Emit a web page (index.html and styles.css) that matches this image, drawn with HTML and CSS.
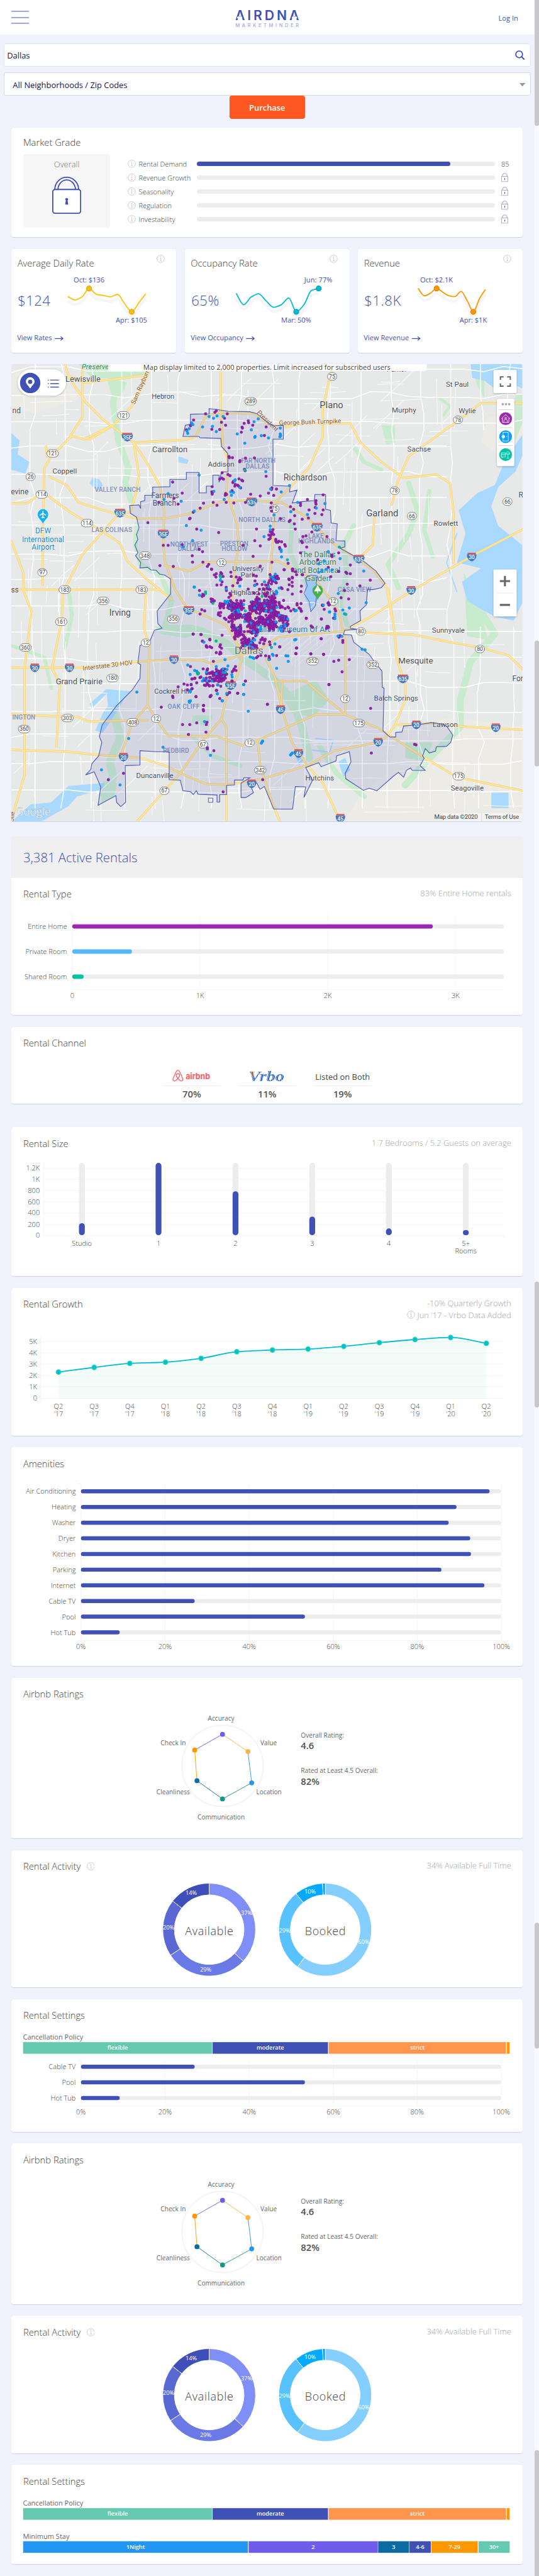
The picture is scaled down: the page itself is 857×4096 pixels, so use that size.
FILE: index.html
```html
<!DOCTYPE html>
<html lang="en">
<head>
<meta charset="utf-8">
<title>AirDNA MarketMinder - Dallas</title>
<link rel="stylesheet" href="styles.css">
</head>
<body>
<svg class="defs" aria-hidden="true">
  <symbol id="info" viewBox="0 0 14 14"><circle cx="7" cy="7" r="6.3" fill="none" stroke="#c4c4c4" stroke-width="1"/><path d="M6 5.8h1.3v4.4M5.8 10.3h2.6" fill="none" stroke="#c4c4c4" stroke-width=".9"/><circle cx="7" cy="3.9" r=".8" fill="#c4c4c4"/></symbol>
  <symbol id="lock" viewBox="0 0 50 64"><path d="M4.500 22V22a20.500 21 0 0 1 41 0M10 22a15 16.500 0 0 1 30 0" fill="none" stroke="currentColor" stroke-width="2"/><rect x="1" y="22" width="48" height="41" rx="4" fill="#fff" stroke="currentColor" stroke-width="2"/><path d="M25 36.500a2.500 2.500 0 0 1 1.500 4.500l1.200 7h-5.400l1.200-7a2.500 2.500 0 0 1 1.500-4.500z" fill="currentColor"/></symbol>
  <symbol id="lock-sm" viewBox="0 0 12 16"><path d="M2 6V5a4 4.200 0 0 1 8 0v1" fill="none" stroke="#9fa8da" stroke-width="1.300"/><rect x=".6" y="6" width="10.800" height="9" fill="#fff" stroke="#9fa8da"/><path d="M6 9v3" stroke="#3f51b5" stroke-width="1.200"/></symbol>
</svg>
<div class="page">
  <main class="content">
    <header class="topbar">
      <button class="menu" aria-label="Menu"><i></i><i></i><i></i></button>
      <svg class="brand" width="112" height="32" viewBox="401 16 112 32">
        <text x="402" y="34.600" class="brand-name" textLength="110" lengthAdjust="spacing">AIRDNA</text>
        <path d="M406 28.200h7.600l1 3.200h-9.600zM500.400 28.200h7.600l1 3.200h-9.600z" fill="#fff"/>
        <text x="402.500" y="46" class="brand-sub" textLength="109" lengthAdjust="spacing">MARKETMINDER</text>
      </svg>
      <a class="login">Log In</a>
    </header>

    <div class="field search"><span>Dallas</span>
      <svg width="17" height="17" viewBox="0 0 17 17"><circle cx="7" cy="7" r="5.800" fill="none" stroke="#3f51b5" stroke-width="1.900"/><path d="M11 11l5 5" stroke="#3f51b5" stroke-width="2.200"/></svg>
    </div>
    <div class="field select"><span>All Neighborhoods / Zip Codes</span>
      <svg width="10" height="6" viewBox="0 0 10 6"><path d="M0 0h10L5 6z" fill="#999"/></svg>
    </div>
    <button class="purchase">Purchase</button>

    <section class="card grade">
      <h2>Market Grade</h2>
      <div class="grade-body">
        <div class="overall"><span>Overall</span><svg width="50" height="64"><use href="#lock"/></svg></div>
        <ul class="metrics">
          <li><svg width="14" height="14"><use href="#info"/></svg><span>Rental Demand</span><b><i style="width:85%"></i></b><em>85</em></li>
          <li><svg width="14" height="14"><use href="#info"/></svg><span>Revenue Growth</span><b></b><em><svg width="12" height="16"><use href="#lock-sm"/></svg></em></li>
          <li><svg width="14" height="14"><use href="#info"/></svg><span>Seasonality</span><b></b><em><svg width="12" height="16"><use href="#lock-sm"/></svg></em></li>
          <li><svg width="14" height="14"><use href="#info"/></svg><span>Regulation</span><b></b><em><svg width="12" height="16"><use href="#lock-sm"/></svg></em></li>
          <li><svg width="14" height="14"><use href="#info"/></svg><span>Investability</span><b></b><em><svg width="12" height="16"><use href="#lock-sm"/></svg></em></li>
        </ul>
      </div>
    </section>

    <div class="kpis">
      <section class="card kpi"><div class="kpi-head"><h2>Average Daily Rate</h2><svg width="14" height="14"><use href="#info"/></svg></div><div data-chart="adr"></div></section>
      <section class="card kpi"><div class="kpi-head"><h2>Occupancy Rate</h2><svg width="14" height="14"><use href="#info"/></svg></div><div data-chart="occupancy"></div></section>
      <section class="card kpi"><div class="kpi-head"><h2>Revenue</h2><svg width="14" height="14"><use href="#info"/></svg></div><div data-chart="revenue"></div></section>
    </div>

    <section class="card map">
      <svg width="881" height="788" viewBox="20 628 881 788">
        <g id="map-base"></g>
        <g class="map-ui">
          <rect x="187" y="620" width="549" height="20" rx="3" fill="#fff"/>
          <text x="460.500" y="638" class="notice" text-anchor="middle" textLength="426">Map display limited to 2,000 properties. Limit increased for subscribed users</text>
          <rect class="raised" x="31" y="637" width="83.500" height="45.500" rx="22.700"/>
          <circle cx="52.500" cy="660.500" r="17.500" fill="#3f51b5"/>
          <path d="M52.500 670c-4-6-7.500-8.500-7.500-12a7.500 7.500 0 0 1 15 0c0 3.500-3.500 6-7.500 12z" fill="#fff"/><circle cx="52.500" cy="658.500" r="3.600" fill="#3f51b5"/>
          <path d="M87 655.500h15M87 661.500h15M87 667.500h15" stroke="#3f51b5" stroke-width="1.600"/><path d="M83 655.500h1.600M83 661.500h1.600M83 667.500h1.600" stroke="#3f51b5" stroke-width="1.600"/>
          <rect class="raised" x="851" y="638" width="40" height="40" rx="2"/>
          <path d="M863 655v-5h5.500M874.500 650h5.500v5M880 661v5h-5.500M868.500 666H863v-5" fill="none" stroke="#666" stroke-width="2.200"/>
          <rect class="raised" x="857" y="688" width="30" height="116" rx="3"/>
          <g fill="#aaa"><circle cx="867" cy="697" r="2"/><circle cx="872.500" cy="697" r="2"/><circle cx="878" cy="697" r="2"/></g>
          <path d="M861 706.500h22M861 737.500h22M861 768.500h22" stroke="#ccc"/>
          <circle cx="872" cy="722" r="11" fill="#9c27b0"/><circle cx="872" cy="753" r="11" fill="#0aa0ff"/><circle cx="872" cy="784" r="11" fill="#00c4a4"/>
          <g fill="none" stroke="#fff" stroke-width=".9"><path d="M864.500 722l7.500-7 7.500 7M866.500 721v7.500h11V721M869 728.500v-2.500a3 3 0 0 1 6 0v2.500"/><circle cx="872" cy="721" r="1.500"/><path d="M867.500 750v-4.500h9v15h-9V756"/><circle cx="868" cy="753" r="2.500" fill="#fff"/><path d="M874 752v2M864.500 781h7v3h-7zM864.500 784v4h7v-4M866 788v2M873 783c0-5 6-5 6 0zM876 783v7M874 790h4"/></g>
          <rect class="raised" x="851" y="982" width="40" height="81" rx="2"/>
          <path d="M856 1022.500h30" stroke="#e6e6e6"/>
          <path d="M862 1002h17.500M870.800 993v18M862 1043h17.500" stroke="#666" stroke-width="3.400"/>
          <rect x="764" y="1402" width="137" height="14" fill="#f5f5f5" opacity=".75"/>
          <path d="M830.500 1402v14" stroke="#ddd"/>
          <text x="749" y="1412" class="attr" textLength="75">Map data ©2020</text><text x="836" y="1412" class="attr" textLength="59">Terms of Use</text>
          <text x="27" y="1406" class="google" textLength="61" lengthAdjust="spacingAndGlyphs">Google</text>
        </g>
      </svg>
    </section>

    <section class="card rentals">
      <div class="banner">3,381 Active Rentals</div>
      <div class="head"><h2>Rental Type</h2><p>83% Entire Home rentals</p></div>
      <div data-chart="type"></div>
    </section>

    <section class="card channel">
      <div class="head"><h2>Rental Channel</h2></div>
      <div class="channels">
        <div><span><svg width="66" height="22" viewBox="0 0 66 22"><path d="M9.600 14.800c-2.600-3-3.800-5-2.900-6.500 1.200-2 4.700-2 5.800 0 .9 1.500-.3 3.500-2.900 6.500-2.500 3.200-5 5.400-7.200 4.200-1.700-1-1.500-2.800-.8-4.500C3.100 10.500 6 4.500 7.300 2.200c1.200-1.800 3.400-1.800 4.600 0 1.300 2.300 4.200 8.300 5.700 12.300.7 1.700.9 3.500-.8 4.500-2.200 1.200-4.700-1-7.200-4.200z" fill="none" stroke="#ff5a5f" stroke-width="1.400"/><text x="23" y="16.500" class="airbnb" textLength="42" lengthAdjust="spacingAndGlyphs">airbnb</text></svg></span><strong>70%</strong></div>
        <div><span><svg width="66" height="24" viewBox="0 0 66 24"><defs><pattern id="hatch" width="3" height="8" patternUnits="userSpaceOnUse" patternTransform="skewX(-14)"><path d="M0 0h2.100v8H0z" fill="#2a5fb8"/><path d="M2.100 0H3v8h-.9z" fill="#9cc6f0"/></pattern></defs><text x="1" y="20.500" class="vrbo" textLength="62" lengthAdjust="spacingAndGlyphs" fill="url(#hatch)">Vrbo</text><path d="M6 3.500l2.500 16M9 3.500l1.500 12" stroke="#f59d5a" stroke-width="1"/></svg></span><strong>11%</strong></div>
        <div><span>Listed on Both</span><strong>19%</strong></div>
      </div>
    </section>

    <section class="card size">
      <div class="head"><h2>Rental Size</h2><p>1.7 Bedrooms / 5.2 Guests on average</p></div>
      <div data-chart="size"></div>
    </section>

    <section class="card">
      <div class="head"><h2>Rental Growth</h2><p>-10% Quarterly Growth<br><svg width="14" height="14"><use href="#info"/></svg> Jun '17 - Vrbo Data Added</p></div>
      <div data-chart="growth"></div>
    </section>

    <section class="card">
      <div class="head"><h2>Amenities</h2></div>
      <div data-chart="amenities"></div>
    </section>

    <section class="card"><div class="head"><h2>Airbnb Ratings</h2></div><div data-chart="ratings"></div></section>
    <section class="card"><div class="head"><h2>Rental Activity <svg width="14" height="14"><use href="#info"/></svg></h2><p>34% Available Full Time</p></div><div data-chart="activity"></div></section>
    <section class="card"><div class="head"><h2>Rental Settings</h2></div><div data-chart="settings"></div></section>
    <section class="card"><div class="head"><h2>Airbnb Ratings</h2></div><div data-chart="ratings"></div></section>
    <section class="card"><div class="head"><h2>Rental Activity <svg width="14" height="14"><use href="#info"/></svg></h2><p>34% Available Full Time</p></div><div data-chart="activity"></div></section>
    <section class="card"><div class="head"><h2>Rental Settings</h2></div><div data-chart="stay"></div></section>
  </main>
  <aside class="rail">
    <svg width="8" height="4440"><g fill="#c8c8cb"><rect y="-4" width="8" height="221" rx="4"/><rect y="1104" width="8" height="217" rx="4"/><rect y="2209" width="8" height="217" rx="4"/><rect y="3314" width="8" height="217" rx="4"/><rect y="4223" width="8" height="222" rx="4"/></g></svg>
  </aside>
</div>
<script src="charts.js"></script>
<script src="map.js"></script>
</body>
</html>
```

FILE: styles.css
```css
* { box-sizing: border-box; }
html { overflow: hidden; background: #f0f3fd; }
body { margin: 0; font-family: "Open Sans", "Noto Sans", sans-serif; color: #555; background: #f0f3fd; }
h2, p, ul { margin: 0; padding: 0; font-weight: 400; }
button { border: 0; font: inherit; padding: 0; }
svg { display: block; }
.defs { position: absolute; width: 0; height: 0; }

.page { display: flex; width: 929px; height: 4440px; zoom: 0.9225; overflow: hidden; }
.content { width: 921px; flex: none; display: flex; flex-direction: column; }
.rail { width: 8px; background: #f8f9fe; }

.topbar { height: 60px; flex: none; background: #fff; display: grid; grid-template-columns: 1fr 112px 1fr; align-items: center; padding: 0 28px 0 20px; }
.menu { width: 30px; height: 23px; background: none; display: flex; flex-direction: column; justify-content: space-between; }
.menu i { height: 2.500px; width: 30px; background: #9fa8da; }
.brand { margin-left: 4px; margin-top: 4px; }
.brand-name { font: 600 23px Inter, "Open Sans", sans-serif; fill: #3f51b5; }
.brand-sub { font: 500 8px Inter, "Open Sans", sans-serif; fill: #9fa8da; }
.login { justify-self: end; font-size: 12px; color: #3f51b5; margin-top: 2px; }

.field { margin: 15px 6px 0; height: 40px; flex: none; background: #fff; border: 1px solid #e2e6f4; border-radius: 3px; display: flex; align-items: center; justify-content: space-between; font-size: 14px; color: #14144e; }
.search { padding: 0 9px 0 5px; }
.select { margin-top: 10px; padding: 2px 9px 0 15px; border: 1.500px solid #d9dbe0; }
.purchase { align-self: center; width: 130px; height: 40px; flex: none; background: #ff5722; color: #fff; border-radius: 4px; font-size: 14px; font-weight: 600; margin-bottom: 15px; }

.card { margin: 0 20px 20px; flex: none; background: #fff; border-radius: 4px; box-shadow: 0 1px 1px #cdd3ee; overflow: hidden; }
.card h2 { font-size: 16px; line-height: 22px; font-weight: 300; color: #444; }

.grade { height: 189px; padding: 14px 20px 0; }
.grade-body { display: flex; margin-top: 10px; }
.overall { width: 150px; height: 127px; background: #f6f6f6; border-radius: 4px; display: flex; flex-direction: column; align-items: center; color: #3f51b5; padding-top: 8px; gap: 12px; }
.overall span { font-size: 14px; line-height: 19px; font-weight: 300; color: #777; }
.metrics { list-style: none; margin-left: 30px; padding-top: 4px; width: 660px; }
.metrics li { display: flex; align-items: center; height: 24px; font-size: 12px; font-weight: 300; color: #444; }
.metrics span { width: 100px; margin-left: 5px; white-space: nowrap; }
.metrics b { width: 514px; height: 7.500px; border-radius: 4px; background: #ededed; }
.metrics b i { display: block; height: 100%; border-radius: 4px; background: #3f51b5; }
.metrics em { font-style: normal; margin-left: 11px; }

.kpis { display: flex; gap: 15px; margin: 0 20px 20px; height: 179px; flex: none; }
.kpi { flex: 1; margin: 0; }
.kpi-head { display: flex; justify-content: space-between; padding: 10px 20px 0 10px; height: 35px; }
.kpi-head h2 { padding-top: 3px; }

.map { height: 788px; margin-bottom: 26px; }
.raised { fill: #fff; filter: drop-shadow(0 1px 2px rgba(0, 0, 0, .25)); }
.notice { font: 400 12px "Open Sans"; fill: #444; }
.attr { font: 10.500px Roboto; fill: #444; }
.google { font: 500 20px "Open Sans"; fill: #fff; stroke: #888; stroke-width: .3px; }

.banner { height: 71px; background: #f0f0f0; color: #3f51b5; font-size: 22px; font-weight: 300; padding: 20px 20px 0; line-height: 31px; }
.head { height: 50px; padding: 17px 20px 0; display: flex; justify-content: space-between; }
.head h2 { display: flex; gap: 10px; }
.head h2 svg { margin-top: 4px; }
.head p { font-size: 14px; line-height: 20px; font-weight: 300; color: #a4a4a4; text-align: right; }
.head p svg { display: inline-block; vertical-align: -1px; }

.channel { height: 133px; margin-bottom: 40px; }
.channels { display: flex; justify-content: center; gap: 30px; margin-top: 20px; }
.channels div { width: 100px; text-align: center; }
.channels span { display: flex; justify-content: center; align-items: center; height: 32px; border-bottom: 2px solid #ebebeb; font-size: 14px; color: #444; white-space: nowrap; }
.channels strong { font-size: 16px; font-weight: 600; line-height: 27px; color: #555; }
.airbnb { font: 700 14px Inter, sans-serif; fill: #ff5a5f; }
.vrbo { font: italic 700 24px "Liberation Serif", serif; }

.t12 { font-size: 12px; font-weight: 300; fill: #444; }
.t11 { font-size: 11px; font-weight: 400; fill: #666; }
.t12r { font-size: 12px; font-weight: 400; fill: #666; }
.t16 { font-size: 16px; font-weight: 600; fill: #505050; }
.t20 { font-size: 19.500px; font-weight: 300; fill: #444; }
.pct { font-size: 10px; font-weight: 400; fill: #fff; }
.seg { font-size: 10px; font-weight: 600; fill: #fff; }
.peak { font-size: 12px; font-weight: 400; fill: #3f51b5; }
.big { font-size: 24px; font-weight: 300; fill: #3f51b5; }
.road-label, .place, .district { font-family: Roboto, sans-serif; }
.place { fill: #4a4f57; paint-order: stroke; stroke: rgba(255, 255, 255, .7); stroke-width: 1.500px; }
.district { fill: #8593bb; font-weight: 500; }
```

FILE: charts.js
```js
const text = (x, y, s, cls, anchor = 'middle', len) =>
  `<text x="${x}" y="${y}" class="${cls}" text-anchor="${anchor}"${len ? ` textLength="${len}"` : ''}>${s}</text>`;
const hline = (x1, x2, y, c = '#f3f3f3') => `<path d="M${x1} ${y}H${x2}" stroke="${c}"/>`;
const vline = (x, y1, y2, c = '#f3f3f3') => `<path d="M${x} ${y1}V${y2}" stroke="${c}"/>`;
const bar = (x, y, w, h, c) => `<rect x="${x}" y="${y}" width="${w}" height="${h}" rx="${Math.min(w, h) / 2}" fill="${c}"/>`;
const BLUE = '#3f51b5', TRACK = '#ededed';

function smooth(p) {
  let d = `M${p[0][0]} ${p[0][1]}`;
  const slope = i => {
    if (i === 0 || i === p.length - 1) return null;
    const a = (p[i][1] - p[i - 1][1]) / (p[i][0] - p[i - 1][0]);
    const b = (p[i + 1][1] - p[i][1]) / (p[i + 1][0] - p[i][0]);
    return a * b <= 0 ? 0 : 2 * a * b / (a + b);
  };
  for (let i = 0; i < p.length - 1; i++) {
    const dx = (p[i + 1][0] - p[i][0]) / 3;
    const sec = (p[i + 1][1] - p[i][1]) / (p[i + 1][0] - p[i][0]);
    const m0 = slope(i) ?? sec, m1 = slope(i + 1) ?? sec;
    d += `C${p[i][0] + dx} ${p[i][1] + m0 * dx} ${p[i + 1][0] - dx} ${p[i + 1][1] - m1 * dx} ${p[i + 1][0]} ${p[i + 1][1]}`;
  }
  return d;
}

// Wraps chart content; y runs from the top edge of the card body.
const frame = (top, bottom, body, w = 881) =>
  `<svg width="${w}" height="${bottom - top}" viewBox="0 ${top} ${w} ${bottom - top}">${body}</svg>`;

function kpi(value, width, link, linkW, color, dark, pts, peaks) {
  const d = smooth(pts);
  return frame(35, 179,
    text(11, 97.5, value, 'big', 'start', width) +
    `<path d="${d}" transform="translate(0 8)" fill="none" stroke="#000" stroke-opacity=".035" stroke-width="5"/>` +
    `<path d="${d}" fill="none" stroke="${color}" stroke-width="2"/>` +
    peaks.map(([x, y, s, tx, ty, w]) => `<circle cx="${x}" cy="${y}" r="4.300" fill="${color}" stroke="${dark}" stroke-width="1.400"/>` + text(tx, ty, s, 'peak', 'start', w)).join('') +
    text(10, 158, link, 'peak', 'start', linkW) +
    `<path d="M${15 + linkW} 154.600h14m-4-3.200l4 3.200l-4 3.200" fill="none" stroke="${BLUE}" stroke-width="1.400"/>`, 283.67);
}

function barRows(rows, y0, x0, x1, ticks, top, bottom, tickY, pitch, h) {
  return ticks.map(([x, s]) => vline(x, top, bottom) + text(x, tickY, s, 't12')).join('') +
    hline(x0 - 6, x1, bottom) + hline(x0 - 6, x0, top) +
    rows.map(([s, end, c], i) => {
      const y = y0 + i * pitch;
      return text(x0 - 9, y + 4.5, s, 't12', 'end') + hline(x0 - 6, x0, y) +
        bar(x0, y - h / 2, x1 - x0, h, TRACK) + bar(x0, y - h / 2, end - x0, h, c || BLUE);
    }).join('');
}
const percentTicks = [[120, '0%'], [265, '20%'], [410, '40%'], [555, '60%'], [699.5, '80%'], [844.5, '100%']];

function segments(y, list) {
  return list.map(([a, b, c, s]) => `<rect x="${a}" y="${y}" width="${b - a}" height="20" fill="${c}"/>` + text((a + b) / 2, y + 13.3, s, 'seg')).join('');
}
const policy = [[20.3, 346.3, '#65c9af', 'flexible'], [347, 545.8, BLUE, 'moderate'], [547, 852.7, '#ff964b', 'strict'], [854, 859, '#ff9800', '']];

function donut(cx, cy, parts) {
  const at = (p, r) => [cx + r * Math.sin(p * 2 * Math.PI), cy - r * Math.cos(p * 2 * Math.PI)];
  let a = 0;
  return parts.map(([b, c]) => {
    const big = b - a > .5 ? 1 : 0;
    const d = `M${at(a, 80)}A80 80 0 ${big} 1 ${at(b, 80)}L${at(b, 60)}A60 60 0 ${big} 0 ${at(a, 60)}Z`;
    a = b;
    return `<path d="${d}" fill="${c}" stroke="#fff" stroke-width="1"/>`;
  }).join('');
}

function ratings() {
  const v = [[364, 97.3], [407.8, 127], [414.3, 181], [364, 208.7], [320, 177.3], [316, 124.4]];
  const dots = ['#6f5ced', '#fbb53c', '#2196f3', '#159788', '#0d6ba3', '#ff9800'];
  const lines = ['#fbb53c', '#2196f3', '#159788', '#0d6ba3', '#ff9800', '#6f5ced'];
  return frame(50, 277,
    '<circle cx="364" cy="151.700" r="70" fill="none" stroke="#f4f4f4" stroke-width="2"/>' +
    v.map((p, i) => `<path d="M${p}L${v[(i + 1) % 6]}" stroke="${lines[i]}"/>`).join('') +
    v.map((p, i) => `<circle cx="${p[0]}" cy="${p[1]}" r="4.200" fill="${dots[i]}"/>`).join('') +
    text(361.6, 74, 'Accuracy', 't11') + text(279, 116, 'Check In', 't11') + text(443.5, 116, 'Value', 't11') +
    text(279, 201, 'Cleanliness', 't11') + text(444, 201, 'Location', 't11') + text(361.6, 244, 'Communication', 't11') +
    text(499, 103, 'Overall Rating:', 't11', 'start') + text(499, 123, '4.6', 't16', 'start') +
    text(499, 164, 'Rated at Least 4.5 Overall:', 't11', 'start') + text(499, 184, '82%', 't16', 'start'));
}

function activity() {
  return frame(50, 237,
    donut(341, 137, [[.369, '#808ef8'], [.657, '#6a79e6'], [.856, '#5a68d4'], [1, '#3f4fba']]) +
    donut(541, 137, [[.602, '#84cfff'], [.892, '#58c1ff'], [.991, '#05a9ff'], [1, '#0b96f5']]) +
    text(341, 147, 'Available', 't20', 'middle', 83) + text(541, 147, 'Booked', 't20', 'middle', 70) +
    [['37%', 405.4, 112], ['29%', 335, 209.6], ['20%', 271, 137], ['14%', 310, 77], ['10%', 515, 75], ['29%', 471, 142], ['60%', 607.4, 161.7]]
      .map(([s, x, y]) => text(x, y, s, 'pct')).join(''));
}

function size() {
  const ys = [[71.3, '1.2K'], [90.2, '1K'], [109.5, '800'], [129, '600'], [148.4, '400'], [168.2, '200'], [187.4, '0']];
  const cols = [[121.6, 166, 'Studio'], [253.7, 62, '1'], [386.4, 111, '2'], [518.6, 154.5, '3'], [650.7, 175, '4'], [783.4, 178, '5+']];
  return frame(50, 257,
    ys.map(([y, s]) => hline(55, 849, y) + text(49, y + 4, s, 't12', 'end')).join('') + vline(55.5, 62, 192) + vline(849, 187, 192) +
    cols.map(([x, t, s]) => bar(x - 5, 62, 10, 124.6, TRACK) + bar(x - 5, t, 10, 186.6 - t, BLUE) + text(x, 204.5, s, 't12')).join('') +
    text(783.4, 218, 'Rooms', 't12'));
}

function growth() {
  const ys = [145, 137, 130, 128, 121.4, 110, 107, 105.4, 100.7, 94.3, 89, 85.4, 95.4];
  const q = ["Q2 '17", "Q3 '17", "Q4 '17", "Q1 '18", "Q2 '18", "Q3 '18", "Q4 '18", "Q1 '19", "Q2 '19", "Q3 '19", "Q4 '19", "Q1 '20", "Q2 '20"];
  const p = ys.map((y, i) => [81.3 + i * 61.45, y]);
  const d = smooth(p);
  return frame(50, 255,
    [[92.5, '5K'], [112, '4K'], [131.4, '3K'], [151.4, '2K'], [170.4, '1K'], [190.4, '0']].map(([y, s]) => hline(50, 849, y) + text(44.5, y + 4, s, 't12', 'end')).join('') +
    vline(50.5, 85, 195) +
    `<path d="${d}V190.400H81.300Z" fill="#2bc9a0" fill-opacity=".06"/><path d="${d}" fill="none" stroke="#00bcd4" stroke-width="2"/>` +
    p.map(([x, y], i) => `<circle cx="${x}" cy="${y}" r="4" fill="#00bcd4" stroke="#2bd9a9" stroke-width="1.500"/>` +
      text(x, 208, q[i].slice(0, 2), 't12') + text(x, 221, q[i].slice(3), 't12')).join(''));
}

const grid = (pts, x0) => pts.map(([x, y]) => [x / 1.6878 - x0, y / 3 - 19]);
const charts = {
  adr: () => kpi('$124', 56, 'View Rates', 60, '#ffc107', '#e0a800',
    grid([[198, 304], [219, 321], [240, 304], [260, 262], [281, 292], [301, 298], [322, 305], [343, 292], [363, 340], [384, 382], [405, 335], [425, 289]], 20),
    [[134, 68.3, 'Oct: $136', 107.4, 57.3, 53], [207.5, 108.5, 'Apr: $105', 180, 127, 54]]),
  occupancy: () => kpi('65%', 48, 'View Occupancy', 90.5, '#00bcd4', '#00a3b8',
    grid([[687, 287], [709, 346], [730, 307], [752, 289], [774, 326], [796, 359], [818, 346], [840, 311], [862, 382], [884, 346], [906, 272], [927, 262]], 318.67),
    [[230.6, 68.3, 'Jun: 77%', 205.7, 57.3, 48.5], [192, 108.5, 'Mar: 50%', 166, 127, 51.5]]),
  revenue: () => kpi('$1.8K', 63, 'View Revenue', 78, '#ff9800', '#e08500',
    grid([[1217, 261], [1235, 300], [1253, 286], [1271, 262], [1289, 281], [1306, 299], [1324, 304], [1342, 277], [1360, 325], [1378, 382], [1396, 313], [1413, 267]], 617.33),
    [[135.7, 68.3, 'Oct: $2.1K', 107.3, 57.3, 56.5], [199, 108.5, 'Apr: $1K', 175.4, 127, 47]]),
  type: () => frame(50, 237, barRows([['Entire Home', 726.5, '#9c27b0'], ['Private Room', 208, '#55b9f8'], ['Shared Room', 124.6, '#00c4a4']],
    83.7, 105, 849, [[105, '0'], [325.4, '1K'], [545.3, '2K'], [765.6, '3K']], 62, 192.5, 207, 43.3, 7.5)),
  size, growth, ratings, activity,
  amenities: () => frame(50, 377, barRows([['Air Conditioning', 824.3], ['Heating', 767.4], ['Washer', 753.8], ['Dryer', 791], ['Kitchen', 792.3], ['Parking', 741.3], ['Internet', 815.4], ['Cable TV', 316], ['Pool', 506], ['Hot Tub', 186.8]],
    75.3, 120, 844, percentTicks, 62.3, 332.3, 347, 27, 7)),
  settings: () => frame(50, 229, text(20, 70, 'Cancellation Policy', 't12r', 'start') + segments(74, policy) +
    barRows([['Cable TV', 316], ['Pool', 506], ['Hot Tub', 186.8]], 116.3, 120, 844, percentTicks, 106, 184.3, 199, 27, 7)),
  stay: () => frame(50, 171, text(20, 70, 'Cancellation Policy', 't12r', 'start') + segments(74, policy) +
    text(20, 127, 'Minimum Stay', 't12r', 'start') +
    segments(131, [[20.3, 407.8, '#2196f3', '1Night'], [409, 631.7, '#6f5ced', '2'], [632.3, 685.6, '#0d6ba3', '3'], [686.3, 723, BLUE, '4-6'], [724, 804, '#ff9800', '7-29'], [805.3, 859, '#65c9af', '30+']]))
};
document.querySelectorAll('[data-chart]').forEach(el => { el.innerHTML = charts[el.dataset.chart](); });
```

FILE: map.js
```js
const gx = x => +(x / 1.6878).toFixed(1), gy = y => +(620 + y / 3).toFixed(1);
const parse = s => s.trim().split(/\s+/).map(p => p.split(',').map(Number));
const pathOf = (s, dy = 0) => 'M' + parse(s).map(([x, y]) => gx(x) + ' ' + gy(y + dy)).join('L');
let seed = 7;
const rnd = () => (seed = (seed * 16807) % 2147483647) / 2147483647;
const out = [];
const stroke = (d, c, w, extra = '') => out.push(`<path d="${d}" fill="none" stroke="${c}" stroke-width="${w}" stroke-linejoin="round" stroke-linecap="round" ${extra}/>`);

out.push('<rect x="20" y="628" width="881" height="788" fill="#e7e8e8"/>');

// Open land to the south-east and north-east
[`1180,1900 1320,1850 1520,1900 1520,2400 1000,2400 1050,2250 1120,2150`, `1420,300 1520,260 1520,380 1460,500 1400,430`, `34,50 180,60 230,200 100,280 34,240`]
  .forEach(s => out.push(`<path d="${pathOf(s)}Z" fill="#ecebe5"/>`));
// Parks and river corridors
[['230,24 430,24 430,80 330,115 270,100', 0], ['1370,24 1410,24 1410,200 1390,140', 9], ['1500,180 1520,180 1520,330 1500,420', 0], ['1110,340 1150,340 1150,430 1125,440', 0], ['310,90 370,120 350,200 325,180', 0],
 ['820,1740 880,1690 920,1660 960,1760 910,1850 850,1830', 0], ['560,1840 620,1840 610,1900 560,1880', 0], ['450,1380 560,1370 600,1400 540,1440 470,1420', 0], ['1180,1980 1260,1980 1240,2080 1180,2060', 0],
 ['300,2180 340,2190 335,2260 290,2300', 0], ['1350,1100 1400,1300 1420,1450 1360,1430', 0]]
  .forEach(([s]) => out.push(`<path d="${pathOf(s)}Z" fill="#c9ebcd"/>`));
[['340,100 330,230 345,420 375,560 365,640 385,740', 11], ['400,850 395,960 410,1060 470,1120 500,1250 480,1380', 9], ['480,1390 580,1400 660,1470 720,1560 800,1660 850,1760 880,1900 900,2060', 14],
 ['330,1800 350,1960 320,2080 330,2160 300,2260', 14], ['1190,640 1215,780 1190,900 1130,1060 1160,1180', 9], ['1380,1240 1440,1420 1370,1560 1340,1760 1340,1900 1240,2080 1180,2200', 12],
 ['1250,680 1235,880 1260,1020', 7], ['850,850 845,1000 870,1100 900,1180', 8], ['200,1180 210,1320 190,1490', 7], ['34,1480 130,1540 150,1700', 6], ['930,2000 980,2140 1060,2260', 9], ['560,1950 620,2050 700,2100', 7],
 ['1030,450 1060,530 1110,570', 7], ['1280,200 1310,240 1290,290', 5], ['1030,860 1000,960 1010,1100 990,1260 1010,1370', 9]]
  .forEach(([s, w]) => stroke(pathOf(s), '#c9ebcd', w));
// Lakes
['1370,24 1520,24 1520,150 1480,115 1440,150 1410,110 1375,95', '1470,520 1520,390 1520,500 1500,580 1450,660 1430,760 1450,860 1520,960 1520,1260 1495,1350 1440,1330 1360,1250 1345,1150 1400,1080 1330,1050 1355,900 1335,780 1390,690 1440,650',
 '34,380 58,420 52,490 86,530 75,590 34,570', '270,610 290,620 300,650 285,680 262,640', '310,1705 380,1715 360,1760 345,1810 300,1930 278,1920 300,1830 315,1790', '262,1780 310,1705 320,1712 270,1800',
 '34,2390 90,2300 150,2290 200,2205 305,2190 302,2220 225,2260 200,2310 120,2390', '890,1130 920,1110 935,1190 922,1270 905,1305 888,1230', '985,2080 1005,2060 1020,2120 1000,2160', '1430,2240 1480,2240 1480,2320 1430,2320', '520,500 550,520 545,540 515,530', '860,2040 890,2060 870,2100']
  .forEach(s => out.push(`<path d="${pathOf(s)}Z" fill="#a9d9ff"/>`));
stroke(pathOf('920,1960 970,1970 960,2030 910,2020'), '#a9d9ff', 2);
stroke(pathOf('1330,900 1300,1050 1330,1200'), '#a9d9ff', 2);

// Local street network
const inLake = (x, y) => x > 1330 && y > 430 && y < 1340;
for (let k = 0; k < 34; k++) {
  const vertical = k % 2, pos = vertical ? 50 + k * 43.5 : 50 + k * 68;
  let pts = [], v = pos;
  const end = vertical ? 2380 : 1520;
  for (let t = vertical ? 24 : 34; t <= end; t += vertical ? 85 : 55) {
    if (rnd() < .35) v = pos + (rnd() - .5) * (vertical ? 24 : 40);
    const x = vertical ? v : t, y = vertical ? t : v;
    if (inLake(x, y)) { if (pts.length > 1) stroke(pathOf(pts.join(' ')), '#fff', 1.6); pts = []; } else pts.push(x.toFixed(0) + ',' + y.toFixed(0));
  }
  if (pts.length > 1) stroke(pathOf(pts.join(' ')), '#fff', 1.6);
}
for (let k = 0; k < 260; k++) {
  const x = 34 + rnd() * 1400, y = 40 + rnd() * 2300, l = 40 + rnd() * 120;
  if (inLake(x + 80, y)) continue;
  const dir = rnd();
  const [dx, dy] = dir < .42 ? [l, (rnd() - .5) * 16] : dir < .84 ? [(rnd() - .5) * 12, l * 1.8] : [l * .6, -l];
  stroke(pathOf(`${x},${y} ${x + dx / 2},${y + dy / 2 + (rnd() - .5) * 8} ${x + dx},${y + dy}`), '#fafafa', 1.1);
}
for (let k = 0; k < 18; k++) stroke(pathOf(`${680 + k * 11},${1340 + k * 14} ${790 + k * 11},${1180 + k * 14}`), '#fafafa', .9);

// Highways
const highways = ['190,24 200,90 250,220 300,310 390,430 430,540 465,650 478,780 476,960 480,1040 510,1190 545,1285 590,1320 660,1375 690,1470 705,1540 690,1640 665,1700 645,1860 600,1950 525,2140 400,2388',
 '435,60 420,120 385,240 330,340 265,410 245,412 210,395 150,500 130,560 125,880 125,1165', '135,450 137,500', '643,60 643,290 650,450 663,520 660,680 690,850 695,950 680,1150 675,1260 690,1480 760,1500',
 '390,430 540,415 570,400 600,290 640,275 740,278 780,335 830,350 880,330 1020,330 1050,430 1110,530 1175,612 1270,595 1310,640 1320,800 1320,1050', '965,60 940,250 940,400 900,560 800,740 795,900 790,1050 780,1170 740,1300 720,1400 700,1500',
 '34,743 80,743 110,705 145,710 205,790 300,890 350,950 370,1040 430,1140 500,1240', '145,605 195,650 230,740 340,800 400,822 480,822 545,800 650,732 740,728 820,740 880,800 920,860 960,940 1040,1030 1090,1095 1130,1190 1148,1400 1155,1550 1180,1680 1180,1760 1150,1890 1125,1950 1100,1980 970,2025 895,2100 760,2170 660,2200 600,2195 540,2150 480,2100 410,2060 330,2050 260,2040 200,2028 34,2018',
 '34,1593 250,1593 400,1562 500,1552 590,1555 615,1572 700,1530 760,1495 810,1435 880,1425 1000,1405 1080,1330 1200,1195 1370,1020 1520,880', '1050,1412 1200,1422 1300,1458 1400,1490 1480,1530 1520,1600',
 '775,1550 800,1640 820,1800 850,1980 895,2100 940,2190 990,2388', '780,1560 805,1665 890,1662 940,1740 1010,1840 1100,1905 1200,2020 1330,2160 1520,2230', '425,1200 420,1390 435,1480 430,1790 490,1948 630,1948 705,1995 750,1970 920,1835 1005,1835 1005,1450 985,1300 920,1140 860,1090 810,1043 600,1048 550,1095 480,1065',
 '34,1190 460,1190', '34,940 68,1100 70,1200 92,1300 72,1600 72,2150 34,2380', '300,890 240,1010 185,1200 180,1350 152,1600 175,1670 165,2000', '430,1790 385,1880 350,2060', '34,1835 230,1850 260,1872 430,1865',
 '1520,225 1400,225 1330,320 1190,500 1160,620 1140,750', '1090,810 1085,960 1045,1030', '750,1970 758,2100 790,2280 815,2388', '645,1860 660,1900 660,2388', '390,430 405,600 395,700 380,790 345,800 300,890', '200,85 250,120 430,80', '240,24 240,300 205,395', '1128,1200 1140,1330', '1150,1890 1260,1880 1360,1900 1520,1915', '822,1660 820,1790', '245,412 330,340'];
highways.forEach(s => stroke(pathOf(s), '#f3cf72', 3.8));
highways.forEach(s => stroke(pathOf(s), '#ffe69b', 2.5));

const place = (s, x, y, size = 13, fill = '', extra = '') => out.push(`<text x="${gx(x)}" y="${gy(y)}" class="place" text-anchor="middle" font-size="${size}" ${fill ? `style="fill:${fill}"` : ''} ${extra}>${s}</text>`);
const district = (s, x, y, w) => out.push(`<text x="${gx(x)}" y="${gy(y)}" class="district" text-anchor="middle" font-size="11" textLength="${(w / 1.6878).toFixed(0)}">${s}</text>`);
[['Lewisville', 242, 115, 14], ['nd', 49, 278], ['Hebron', 475, 204, 12], ['Plano', 965, 253, 16], ['Carrollton', 495, 481, 14], ['Addison', 644, 555, 12.5], ['Richardson', 889, 625, 15], ['Garland', 1113, 811, 16],
 ['Murphy', 1176, 276, 12.5], ['Wylie', 1360, 277, 12.5], ['Sachse', 1220, 477, 12.5], ['St Paul', 1331, 141, 12.5], ['Parker', 1155, 64, 12], ['Coppell', 189, 590, 12.5], ['Farmers', 481, 718, 13], ['Branch', 479, 755, 13],
 ['University', 722, 1094, 12.5], ['Park', 722, 1126, 12.5], ['Highland Park', 737, 1219, 12.5], ['Rowlett', 1298, 861, 12.5], ['evine', 58, 697, 13], ['ss', 44, 1203], ['R', 1516, 713], ['Irving', 350, 1325, 15], ['Grand Prairie', 231, 1678, 14],
 ['Cockrell Hill', 503, 1727, 12], ['Sunnyvale', 1305, 1413, 12.5], ['Mesquite', 1210, 1572, 14.5], ['Balch Springs', 1153, 1763, 12.5], ['Lawson', 1296, 1901, 12.5], ['Duncanville', 451, 2165, 12.5], ['Hutchins', 931, 2177, 12.5], ['Seagoville', 1360, 2228, 12.5], ['For', 1507, 1664, 13]]
  .forEach(a => place(...a));
[['FAR NORTH', 752, 533, 100], ['DALLAS', 750, 563, 70], ['VALLEY RANCH', 343, 685, 134], ['NORTH DALLAS', 763, 840, 136], ['LAS COLINAS', 326, 893, 118], ['NORTHWEST', 551, 966, 110], ['DALLAS', 552, 991, 68], ['PRESTON', 682, 963, 82], ['HOLLOW', 683, 990, 74], ['LAKE', 920, 924, 45], ['HIGHLANDS', 921, 951, 104], ['CASA VIEW', 1032, 1202, 98], ['OAK CLIFF', 535, 1805, 92], ['REDBIRD', 513, 2033, 76], ['INGTON', 70, 1860, 68]]
  .forEach(a => district(...a));
place('DFW', 126, 899, 13, '#1c8ad1'); place('International', 126, 943, 13, '#1c8ad1'); place('Airport', 126, 985, 13, '#1c8ad1');
place('The Dallas', 924, 1022, 13.5, '#2f8a55'); place('Arboretum', 925, 1063, 13.5, '#2f8a55'); place('and Botanical', 922, 1104, 13.5, '#2f8a55'); place('Garden', 926, 1147, 13.5, '#2f8a55');
place('Dallas Museum Of Art', 850, 1409, 13.5, '#28849a'); place('Preserve', 278, 50, 12.5, '#2f8a55', 'font-style="italic"');
const tilted = (s, x, y, a) => out.push(`<text transform="translate(${gx(x)} ${gy(y)}) rotate(${a})" class="place" text-anchor="middle" font-size="11" style="fill:#8a5a2c">${s}</text>`);
tilted('Sam Rayburn', 415, 145, -66); tilted('Interstate 30 HOV', 315, 1593, -7); tilted('George Bush Turnpike', 903, 334, -2); tilted('President', 775, 325, 45); tilted('olle', 42, 2365, -85);

// City limits
const limits = `609,254 630,258 665,268 727,270 748,280 775,320 795,343 825,340 825,412 795,412 795,652 845,655 843,685 865,675 851,742 880,735 915,730 917,698 948,698 948,775 962,780 964,845 982,850 978,937 1004,938 1004,970 990,975 1020,1005 1060,1045 1095,1095 1121,1157 1110,1180 1085,1190 1070,1188 1066,1270 1048,1300 1050,1350 1020,1380 1020,1390 1040,1395 1003,1400 1000,1422 1023,1424 1030,1462 1075,1525 1085,1550 1112,1612 1113,1695 1118,1700 1115,1920 1135,1952 1152,1952 1152,1928 1170,1926 1175,1895 1210,1890 1255,1878 1290,1885 1302,1900 1318,1942 1312,1980 1300,2000 1270,2003 1268,2025 1250,2035 1238,2012 1230,2050 1235,2062 1223,2100 1238,2125 1200,2125 1195,2112 1183,2125 1175,2160 1160,2135 1145,2155 1097,2230 1075,2217 1058,2228 1007,2168 1005,2140 1022,2080 1017,2028 980,2050 978,2076 935,2105 928,2085 890,2110 910,2175 885,2265 890,2210 860,2208 852,2325 797,2325 770,2208 757,2222 748,2190 728,2195 738,2240 716,2265 702,2265 702,2190 728,2163 710,2163 708,2175 683,2175 683,2200 660,2202 660,2250 640,2250 640,2288 632,2288 632,2252 577,2248 572,2230 563,2250 555,2235 533,2230 525,2175 493,2173 493,2028 455,2028 408,2023 408,2097 365,2100 366,2290 352,2312 340,2290 338,2255 286,2305 294,2210 275,2132 250,2148 265,2120 268,2090 288,2050 297,1980 290,1950 298,1890 340,1790 385,1710 408,1650 410,1578 402,1570 408,1480 437,1455 450,1400 472,1390 460,1365 458,1300 497,1212 497,1135 480,1115 465,1110 455,1090 440,1088 430,1075 408,1078 410,1050 395,1015 402,1000 393,960 402,930 398,905 405,870 398,815 380,795 378,755 405,752 410,770 410,735 422,730 422,702 445,702 445,660 495,658 495,620 543,620 543,584 580,584 580,690 601,690 601,655 620,655 620,598 638,598 638,635 645,582 664,580 663,485 645,450 643,408 583,405 580,398 533,398 540,340 555,335 555,283 609,281`;
out.push(`<path d="${pathOf(limits)}Z" fill="#3f51b5" fill-opacity=".12" stroke="#4657b8" stroke-width="1.2"/>`);
stroke(pathOf('888,1130 905,1115 925,1120 920,1160 935,1190 922,1220 918,1275 905,1305 900,1250 885,1210 895,1170 888,1130'), '#4657b8', 1);
stroke(pathOf('607,2268 620,2268 620,2290 607,2290 607,2268'), '#4657b8', 1);

// Route markers
`289,730,216 121,360,289 121,154,486 26,90,606 114,122,698 114,254,846 12,645,1050 348,423,1014 97,124,1101 183,189,1190 183,413,1190 78,1333,312 78,1149,678 66,1477,735 66,1199,809 75,967,88 75,799,772 356,301,1248 356,505,1342 161,179,1356 12,425,1465 360,75,1489 180,328,1647 303,197,1854 360,71,1911 408,387,1876 12,455,1857 12,970,1251 352,910,1560 352,1085,1578 12,1005,1754 175,1045,1880 67,591,1990 12,727,1982 342,758,2123 67,479,2230 80,1051,1406 80,1397,1497 175,1335,2155`
  .split(' ').forEach(s => {
    const [n, x, y] = s.split(','), w = n.length > 2 ? 20 : 16;
    out.push(`<rect x="${gx(x) - w / 2}" y="${gy(y) - 6.5}" width="${w}" height="13" rx="6.5" fill="#fff" stroke="#777"/><text x="${gx(x)}" y="${gy(y) + 3.4}" class="road-label" text-anchor="middle" font-size="9.5" fill="#444">${n}</text>`);
  });
`35E,371,402 35E,476,903 635,350,795 635,733,737 635,923,868 635,1045,1033 30,1373,1022 30,1197,1195 35E,550,1298 30,507,1553 30,102,1595 30,203,1595 35E,672,1687 45,817,1811 45,869,2038 45,991,2373 20,360,2057 20,733,2195 20,1101,1980 20,1212,1890 20,1443,1905 635,1173,1652`
  .split(' ').forEach(s => {
    const [n, x, y] = s.split(','), X = gx(x), Y = gy(y), w = n.length > 2 ? 9.5 : 8;
    out.push(`<path d="M${X - w} ${Y - 5}h${2 * w}c1 6-3 11-${w} 12.500c-${w - 3}-1.500-${w + 1}-6.500-${w}-12.500z" fill="#3f78c4"/><path d="M${X - w + 1} ${Y - 6.3}h${2 * w - 2}" stroke="#d95757" stroke-width="2.600"/><text x="${X}" y="${Y + 3.8}" class="road-label" text-anchor="middle" font-size="9" font-weight="500" fill="#fff">${n}</text>`);
  });
const pin = (x, y, c) => out.push(`<path d="M${x} ${y + 16}c-2-6-9-9-9-16a9 9 0 0 1 18 0c0 7-7 10-9 16z" fill="${c}"/>`);
pin(74.5, 887, '#12b0f5'); out.push('<path d="M74.500 881v12M69 888.500l5.500-3.500 5.500 3.500M72 893l2.500-1.500 2.500 1.500" stroke="#fff" stroke-width="1.700" fill="none"/>');
pin(548, 1018, '#46b04a'); out.push('<path d="M548 1010l-5 9h10zM548 1018v5" fill="#fff" stroke="#fff" stroke-width="1.200"/>');

// Listings
const PURPLE = ['#9420ac', '#73188a'], SKY = ['#0aa0ff', '#0b7fd0'], GREEN = ['#00bf9f', '#009b81'];
const dot = (x, y, [c, e]) => out.push(`<rect x="${(x - 2.1).toFixed(1)}" y="${(y - 2.1).toFixed(1)}" width="4.200" height="4.200" rx="1.500" fill="${c}" stroke="${e}" stroke-width=".6"/>`);
const dots = (s, dy, c) => parse(s).forEach(([x, y]) => dot(gx(x), gy(y + dy), c));
dots(`630,265 626,273 599,281 662,281 654,304 564,313 645,325 657,340 555,343 543,364 617,361 640,362 711,330 723,317 724,327 736,340 705,350 706,355 703,376 775,349 770,393 667,457 667,502 668,508 677,508 715,510 741,509 699,523 698,529 712,568 714,575 647,586 664,595 670,601 640,619 646,613 651,619 696,617 704,624 707,628 678,636 680,630 685,646 684,655 692,650 695,655 701,664 775,604 503,634 618,658 617,684 618,690 618,697 531,691 657,693 656,702 660,698 676,678 730,697 758,706 792,664 791,672 805,670 782,691 797,703 507,718 463,739 519,748 593,743 621,739 632,754 583,769 659,739 681,742 715,739 790,742 789,766 791,784 941,700 895,724 920,730 919,738 920,748 875,743 875,755 846,761 855,775 900,778 941,778 917,796 918,765 937,802 858,808 880,826 898,820 563,790 554,821 552,824 431,844 573,877 637,895 747,877 817,823 842,838 845,832 857,850 860,877 908,892 952,916 882,916 891,912 878,940 880,947 742,937 708,961 758,964 795,880 787,890 793,893 791,902 783,908 788,912 797,905 783,930 787,925 803,930 803,938 812,940 809,945 805,945 820,943 829,957 831,965 814,972 815,980 476,961 490,961 580,981 590,994 560,1015 561,1048 591,1048 737,1018 792,1048 839,1054 828,1087 893,970 875,1000 986,1000 966,1012 967,1019 925,1036 1020,1063 956,1075 986,1096 1007,1100 1010,1106 1020,1108 963,1123 880,1112 851,1126 842,1138 861,1098 852,1083 852,1093 1011,1162 1078,1141 1048,1171 1003,1195 466,1066 505,1070 604,1070 608,1060 616,1084 531,958 758,1069`, 0, PURPLE);
dots(`609,295 632,292 650,295 622,304 752,307 740,322 558,328 562,337 590,349 619,346 630,373 551,358 545,370 547,382 691,385 732,364 743,398 742,403 761,394 782,406 816,355 816,385 817,393 815,400 713,433 774,580 580,598 685,622 683,628 699,662 623,682 672,685 680,688 674,702 490,694 478,724 528,733 653,724 740,724 843,652 819,685 788,670 867,739 946,745 921,769 895,802 847,787 566,784 543,859 586,883 798,804 787,862 787,880 769,916 561,937 533,970 819,985 819,993 820,1021 956,994 990,1030 944,1042 928,1057 950,1085 967,1088 937,1093 928,1100 1059,1094 985,1210 566,1177`, 0, SKY);
dots('988,970 837,1036 713,572', 0, GREEN);
dots(`877,100 865,62 875,90 865,70 892,138 936,142 955,180 951,190 955,60 959,68 940,72 975,90 977,100 971,138 993,32 1015,38 563,220 586,222 611,247 590,257 601,285 935,244 990,228 987,236 998,253 998,263 862,322 905,322 942,325 1017,352 986,355 972,361 996,415 958,481 815,286 864,292 555,388 559,452 568,448 573,472 536,478 557,482 546,483 519,493 546,508 559,503 503,541 504,548 571,544 612,544 614,538 640,553 692,526 668,522 662,532 631,511 715,463 676,463 610,488 620,487 643,490 593,589 592,610 593,617 470,598 532,688 553,688 573,679 603,676 601,688 600,727 549,739 604,808 604,814 623,823 779,583 765,973 650,1036 360,940 316,973 1079,604 1207,790 1211,793 1081,835`, 1200, PURPLE);
dots(`547,380 567,408 573,412 554,429 554,514 555,518 633,528 710,532 710,481 648,565 551,568 555,565 552,573 399,520 723,619 596,673 375,760 475,805 613,847 765,773 763,778 761,784 851,835 846,845 849,840 296,922 350,1000 984,230 995,232 1054,298 1063,301 975,116 975,128 998,95 1003,115 1017,85 1066,58 960,105 975,140 859,98`, 1200, SKY);
dots('1007,118 576,420 576,427', 1200, GREEN);

// Downtown sheet
const center = (s, c) => parse(s).forEach(([x, y]) => dot(330 + x / 3, 980 + y / 3, c));
center(`106,5 120,34 130,28 128,45 153,22 158,28 150,35 165,42 160,70 133,86 155,85 205,20 207,42 233,45 243,60 250,48 258,57 248,60 240,75 215,90 181,98 182,115 200,130 205,140 195,150 322,35 337,40 330,65 295,107 325,128 340,82 328,88 350,132 367,84 353,108 385,86 397,88 420,68 415,80 440,75 450,52 445,40 412,48 400,75 480,7 505,55 523,6 524,50 522,72 508,58 523,92 500,110 523,133 478,166 507,85 545,33 570,92 568,120 576,33 568,182 558,205 570,222 530,212 515,220 500,200 505,205 460,203 472,201 486,208 455,180 465,100 470,105 43,115 60,134 65,140 57,145 55,214 70,220 46,236 103,158 110,160 105,172 120,168 112,175 172,258 180,265 140,240 150,245 142,230 153,228 148,195 150,205 160,185 10,340 50,342 160,346 97,370 58,376 78,400 82,408 97,405 106,410 151,395 148,405 157,413 130,436 150,433 147,443 154,440 115,481 405,380 408,395 457,406 442,451 403,455 403,465 405,470 385,452 544,412 541,440 619,442 685,445 673,364 595,259 673,262 620,298 627,305 508,328 360,370 370,368 380,375 375,390 355,385 368,360 383,367 338,462 360,450 345,455 25,663 98,663 103,658 130,631 140,565 88,602 95,607 113,607 137,603 68,604 75,606 211,582 280,583 241,646 199,643 186,652 64,709 394,703 712,601 229,508 222,520 218,528 232,528 212,535 62,520 82,527 85,520 110,535 130,522 18,569 5,572 45,565 65,580 80,545 100,540 50,562 0,600 5,622 678,190 710,178 712,190 688,212 702,300 710,305 700,310 680,192`, PURPLE);
const clusters = [[215, 195, 26, 18, 60], [255, 190, 16, 16, 30], [230, 235, 26, 22, 50], [325, 200, 22, 20, 55], [360, 205, 20, 20, 40], [415, 180, 30, 25, 65], [345, 165, 10, 12, 15], [430, 230, 18, 20, 45], [400, 275, 28, 20, 75], [420, 295, 16, 20, 40], [355, 270, 14, 18, 25], [290, 255, 18, 18, 35], [315, 290, 16, 22, 35], [245, 330, 22, 24, 55], [330, 325, 22, 16, 45], [290, 385, 26, 18, 70], [320, 405, 20, 10, 30], [475, 260, 20, 15, 30], [485, 300, 20, 20, 12], [160, 190, 15, 12, 10], [145, 560, 24, 20, 60], [160, 540, 20, 18, 35], [110, 555, 30, 25, 20], [425, 55, 18, 20, 18], [390, 120, 28, 30, 15], [215, 290, 12, 20, 14]];
const gauss = () => rnd() + rnd() + rnd() - 1.5;
clusters.forEach(([x, y, sx, sy, n]) => {
  for (let i = 0; i < n; i++) {
    const c = rnd() < .09 ? SKY : PURPLE;
    dot(330 + (x + gauss() * sx * 1.25) / 3, 980 + (y + gauss() * sy * 1.25) / 3, c);
  }
});
center(`16,97 43,139 151,61 181,107 66,382 251,92 330,88 379,70 435,30 425,55 433,62 455,102 440,118 443,125 440,132 400,95 537,220 543,218 499,262 465,300 462,315 468,325 433,391 420,445 424,450 490,452 500,453 502,481 442,517 541,368 535,370 175,472 130,508 165,520 185,523 210,550 212,562 130,545 65,570 58,583 82,582 107,583 138,603 271,601 271,652 136,649 184,647 160,685 305,458 318,462 325,466 402,472 190,505 185,180 175,170 190,170 240,215 245,225 360,300 358,312 355,322 325,330 300,400 310,385 415,218 380,195 328,205 715,226 683,190`, SKY);
center('150,38 153,46 74,122 75,130 112,181 129,376 415,409 280,220 367,145 32,540 38,543 177,538', GREEN);
out.push(`<text x="${gx(725)}" y="${gy(1524)}" class="place" text-anchor="middle" font-size="18" font-weight="500" opacity=".6">Dallas</text>`);
document.getElementById('map-base').innerHTML = out.join('');
```
